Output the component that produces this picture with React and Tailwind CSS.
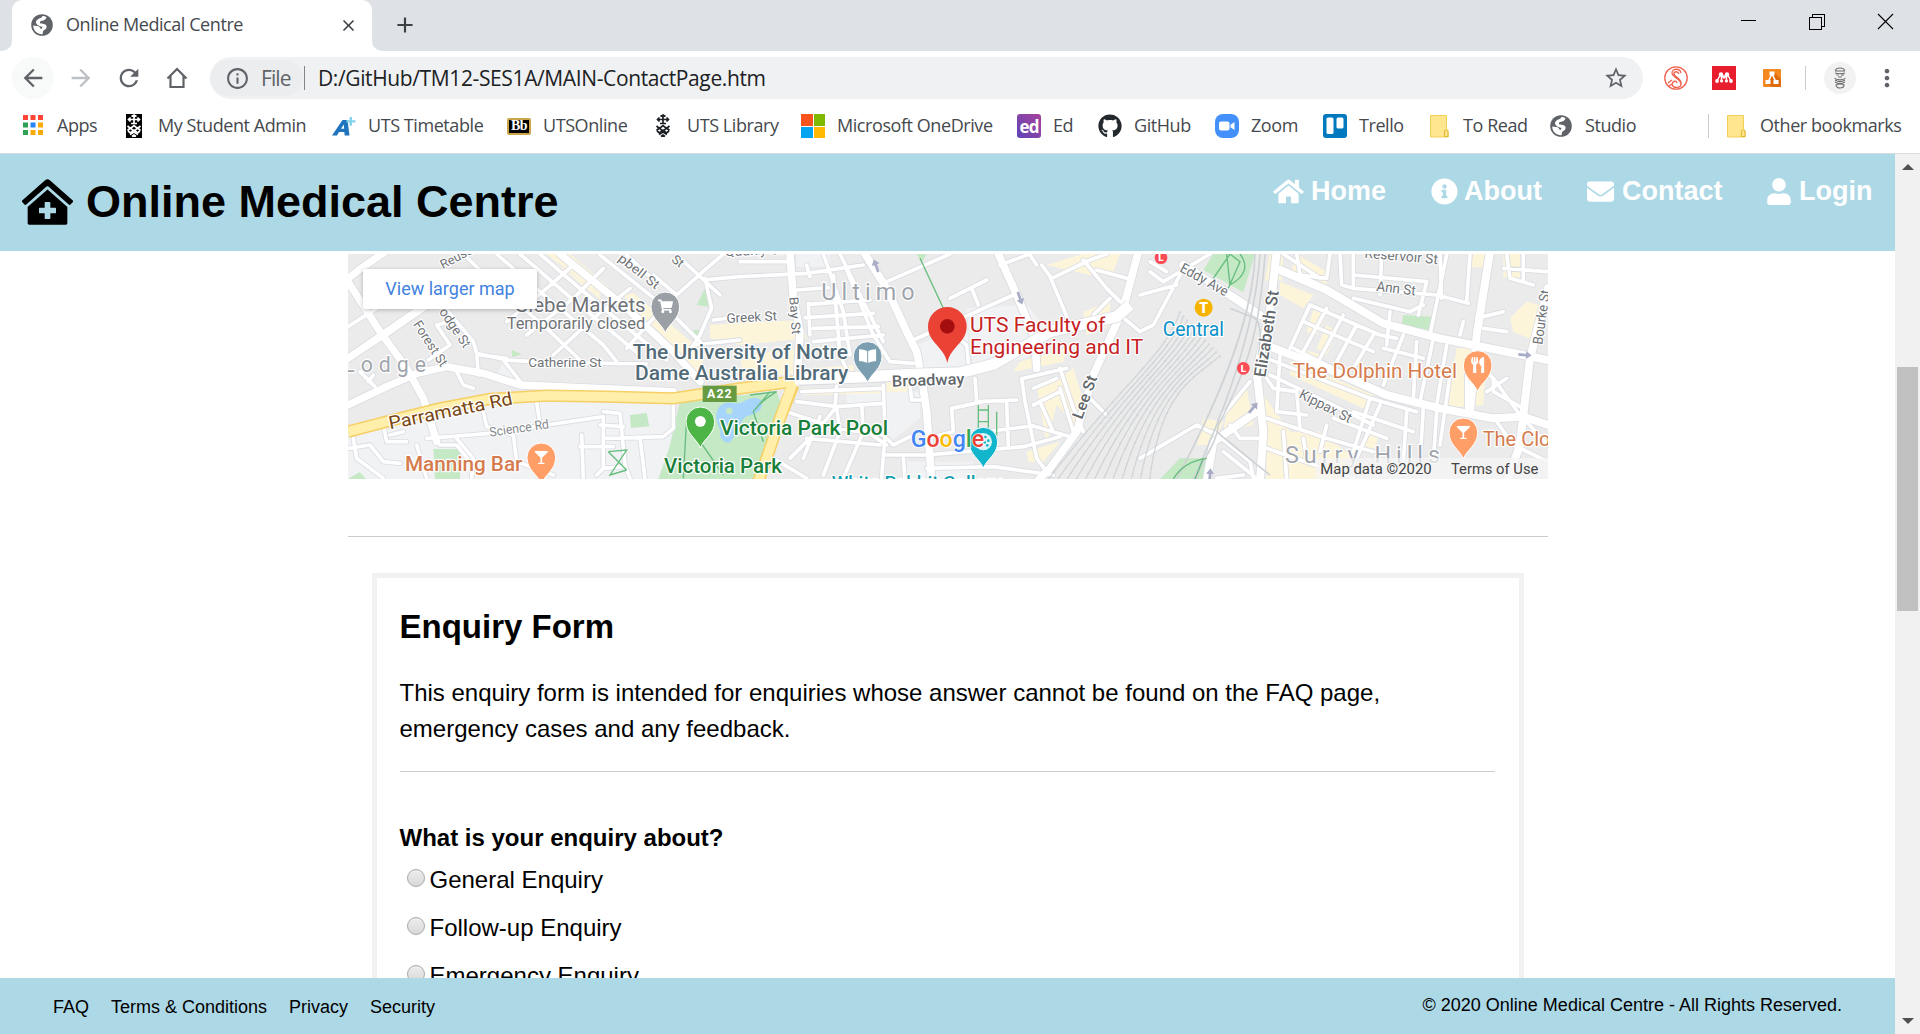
import React from "react";
import { FaHome, FaInfoCircle, FaEnvelope, FaUser, FaClinicMedical, FaGithub, FaUtensils, FaShoppingCart, FaGlassMartini, FaBookOpen } from "react-icons/fa";
import { MdArrowBack, MdArrowForward, MdRefresh, MdStarBorder, MdMoreVert, MdInfoOutline, MdClose, MdAdd } from "react-icons/md";

function Folder() {
  return (
    <svg viewBox="0 0 24 24" className="size-6">
      <path d="M3.5 1.5h16v14l1.5 1v6.500h-17.500z" fill="#ffe68f" stroke="#f2cf56" strokeWidth="1" />
      <path d="M17.500 22.500v-5q0-1.500 1.700-1.500t1.800 1.500v5z" fill="#ffe68f" stroke="#e3bb3c" strokeWidth="1.200" />
    </svg>
  );
}

function Apps() {
  const c = ["#ff4438", "#ff4438", "#ff4438", "#2fa157", "#2684fc", "#fbab07", "#2fa157", "#fbab07", "#fbab07"];
  return (
    <svg viewBox="0 0 24 24" className="size-6">
      {c.map((f, i) => <rect key={i} x={2 + (i % 3) * 7.5} y={1 + Math.floor(i / 3) * 7.5} width="5" height="5" fill={f} />)}
    </svg>
  );
}

function Crest({ inverse }) {
  const ink = inverse ? "#fff" : "#1c2024";
  return (
    <svg viewBox="0 0 24 24" className="size-6">
      {inverse && <rect x="4" width="16" height="24" fill="#000" />}
      <g stroke={ink} fill="none" strokeWidth="1.700">
        <path d="M12 1v8M7 5.500h10M9.500 2.500l2.500-1.500 2.500 1.500M8.500 3.500L6.500 5.500l2 2M15.500 3.500l2 2-2 2M9 9.500h6" />
        <path d="M5.500 12l3 2.500 3.500-3 3.500 3 3-2.500M5.500 16.500l3-2.500 3.500 3.500 3.500-3.500 3 2.500M6 17l2.500 2 3.500-3 3.500 3 2.500-2M8 20.500l4-2.500 4 2.500M10 22.500l2-1.500 2 1.500" />
      </g>
    </svg>
  );
}

function Globe() {
  return (
    <svg viewBox="0 0 24 24" className="size-6 shrink-0">
      <circle cx="12" cy="12" r="10.800" fill="#5f6368" />
      <path d="M16.500 4.200C16 6.500 14 7.500 12 7.800C10.500 8 9.500 9 10 10.300C12 11 15.500 10.500 16.500 13C17 16 15 16.500 13.800 17.200C12.800 18 13 19.500 12.500 21.200C7.500 21.500 3.200 17.500 3.200 12.500L8.500 13.200C10.500 13.500 9.500 16.500 12 15.500L12.500 13.800C10 13.500 6.500 12 6 9.500C5.800 7.500 8.500 5.500 10.500 5C11.500 4.700 12 3.800 12.500 3C14 3 15.500 3.500 16.500 4.200Z" fill="#fff" />
    </svg>
  );
}

const timetable = (
  <svg viewBox="0 0 24 24" className="size-6">
    <path fillRule="evenodd" d="M0 21.500L10.500 6h5l2 15.500h-4.800l-.4-3.500H7l-2 3.500zM9 14.700h3.200l-.5-4.200z" fill="#1f74bd" />
    <path d="M17.500 3h2.500v3.200h3.500v2.300H20v3.200h-2.500V8.500H14.500V6.200h3z" fill="#85d2ec" />
  </svg>
);

const blackboard = (
  <div className="flex h-[17px] w-6 items-center justify-center rounded-[2px] border-2 border-[#c9a64a] bg-black pb-px font-['Liberation_Serif',serif] text-[14px] leading-none font-bold tracking-[-0.5px] text-white">Bb</div>
);

const microsoft = (
  <div className="grid size-6 grid-cols-2 gap-[1px]">
    <div className="bg-[#f8531d]" /><div className="bg-[#7fba00]" /><div className="bg-[#02a4ef]" /><div className="bg-[#ffb901]" />
  </div>
);

const ed = (
  <div className="flex size-6 items-center justify-center rounded-[3px] bg-linear-to-tr from-[#5d43b5] to-[#a83f9c] font-['Open_Sans',sans-serif] text-[17px] leading-none font-bold tracking-[-0.8px] text-white">ed</div>
);

const zoom = (
  <svg viewBox="0 0 24 24" className="size-6">
    <rect width="24" height="24" rx="8" fill="#4490fb" />
    <rect x="4" y="7.500" width="10.500" height="9" rx="2" fill="#fff" />
    <path d="M15.500 10.700l4-2.700v8l-4-2.700z" fill="#fff" />
  </svg>
);

const trello = (
  <svg viewBox="0 0 24 24" className="size-6">
    <rect width="24" height="24" rx="3" fill="#0079bf" />
    <rect x="3.500" y="3.500" width="7" height="16.500" rx="1.500" fill="#fff" />
    <rect x="13.500" y="3.500" width="7" height="11" rx="1.500" fill="#fff" />
  </svg>
);

const bookmarks = [
  { label: "Apps", icon: <Apps />, w: "w-[101px]" },
  { label: "My Student Admin", icon: <Crest inverse />, w: "w-[210px]" },
  { label: "UTS Timetable", icon: timetable, w: "w-[175px]" },
  { label: "UTSOnline", icon: blackboard, w: "w-[144px]" },
  { label: "UTS Library", icon: <Crest />, w: "w-[150px]" },
  { label: "Microsoft OneDrive", icon: microsoft, w: "w-[216px]" },
  { label: "Ed", icon: ed, w: "w-[81px]" },
  { label: "GitHub", icon: <FaGithub className="size-6 text-[#24292e]" />, w: "w-[117px]" },
  { label: "Zoom", icon: zoom, w: "w-[108px]" },
  { label: "Trello", icon: trello, w: "w-[104px]" },
  { label: "To Read", icon: <Folder />, w: "w-[122px]" },
  { label: "Studio", icon: <Globe />, w: "w-[159px]" },
];

function Bookmark({ label, icon, w }) {
  return (
    <div className={"flex shrink-0 items-center gap-3 whitespace-nowrap " + w}>
      <div className="flex size-6 shrink-0 items-center justify-center">{icon}</div>
      <span className="-mt-px">{label}</span>
    </div>
  );
}

function BrowserChrome() {
  return (
    <div className="font-['Open_Sans',sans-serif] text-[#45494d]">
      <div className="flex h-[51px] bg-[#dee1e6]">
        <div className="h-full w-3 bg-white"><div className="h-full rounded-br-[10px] bg-[#dee1e6]" /></div>
        <div className="flex h-full w-[360px] items-center rounded-t-[10px] bg-white pb-px pl-[18px]">
          <Globe />
          <span className="-mt-px ml-[12px] w-[273px] text-[18px] tracking-[-0.43px]">Online Medical Centre</span>
          <MdClose className="size-[19px] text-[#3c4043]" />
        </div>
        <div className="h-full w-5 bg-white"><div className="h-full rounded-bl-[10px] bg-[#dee1e6]" /></div>
        <MdAdd className="mt-3 size-[26px] text-[#3c4043]" />
        <svg viewBox="0 0 160 24" className="mt-[9px] ml-auto h-6 w-[160px]" fill="none" stroke="#000" shapeRendering="crispEdges">
          <path d="M1 11.500h15" />
          <path d="M69.500 8.500h11.500v11.500H69.500zM72.500 8V5.500h11.500v11.500h-3" />
          <path d="M138 5l15 15M153 5l-15 15" shapeRendering="auto" strokeWidth="1.100" />
        </svg>
        <div className="w-[20px]" />
      </div>
      <div className="flex h-[52px] items-start bg-white pt-[6px] pl-3 text-[#5f6368]">
        <div className="flex gap-[6px]">
          <div className="flex size-[42px] items-center justify-center rounded-full bg-[#f8f9f9]"><MdArrowBack className="size-7" /></div>
          <div className="flex size-[42px] items-center justify-center text-[#bdc1c6]"><MdArrowForward className="size-7" /></div>
          <div className="flex size-[42px] items-center justify-center"><MdRefresh className="size-7" /></div>
          <div className="flex size-[42px] items-center justify-center">
            <svg viewBox="0 0 24 24" className="size-6" fill="none" stroke="currentColor" strokeWidth="2.200"><path d="M2.500 12.500L12 3l9.500 9.500M5.500 10v11h13V10" /></svg>
          </div>
        </div>
        <div className="ml-3 flex h-[42px] w-[1433px] items-center rounded-full bg-[#eff1f3] pr-[14px] text-[21px] leading-none">
          <div className="flex h-9 w-[93px] items-center rounded-full bg-[#ebedef] pl-[15px]">
            <MdInfoOutline className="size-[25px]" />
            <span className="ml-[11px] tracking-[-0.9px]">File</span>
          </div>
          <div className="ml-px h-6 w-px bg-[#80868b]" />
          <span className="ml-[13px] tracking-[-0.38px] text-[#202124]">D:/GitHub/TM12-SES1A/MAIN-ContactPage.htm</span>
          <MdStarBorder className="ml-auto size-[26px]" />
        </div>
        <div className="flex h-[42px] flex-1 items-center">
          <svg viewBox="0 0 24 24" className="ml-[21px] size-6" fill="none" stroke="#f0614d" strokeWidth="1.300">
            <circle cx="12" cy="12" r="11.200" />
            <path d="M17 7C16 2 8 2 8 7c0 4 9 6 9 11 0 4-8 5-9 0l-3 2M15 8c-1-3-5-3-5 0 0 3 9 5 7 11M8 18c1-3 4-4 5-1M4 17l4-3" />
          </svg>
          <svg viewBox="0 0 24 24" className="ml-6 size-6">
            <rect width="24" height="24" fill="#e81e2e" />
            <path d="M5 15L8.500 8.500L12 11L15.500 8.500L19 15M9.500 9.500V15M14.500 9.500V15" fill="none" stroke="#fff" strokeWidth="1.500" />
            <g fill="#fff"><circle cx="9" cy="8.500" r="2.200" /><circle cx="15" cy="8.500" r="2.200" /><circle cx="5" cy="15" r="1.900" /><circle cx="9.600" cy="15" r="1.600" /><circle cx="14.400" cy="15" r="1.600" /><circle cx="19" cy="15" r="1.900" /><circle cx="12" cy="11" r="1.800" /></g>
          </svg>
          <svg viewBox="0 0 18 18" className="ml-[27px] size-[18px]">
            <rect width="18" height="18" rx="1" fill="#f5891f" /><path d="M11 3l7 7v8H9l-6-4z" fill="#df6c0c" />
            <path d="M9 5L5 13M9 5l4 8" stroke="#fff" strokeWidth="1.500" />
            <path d="M6.500 2.500h5v4h-5zM2.500 11h5v4h-5zM10.500 11h5v4h-5z" fill="#fff" />
          </svg>
          <div className="ml-6 h-6 w-px bg-[#c9ccd0]" />
          <div className="ml-[18px] flex size-8 items-center justify-center rounded-full bg-[#f2f2f2]">
            <svg viewBox="0 0 16 22" className="h-[22px] w-4" fill="none" stroke="#6b6b6b" strokeWidth="1.100">
              <path d="M3.500 4c0-4 9-4 9 0zM3 6c2 1 8 1 10 0M4.500 8h2M9 8h3M6 10h4M2.500 11c2 2.500 9 2.500 11 0M3 13c3 2 7 2 10 0M3 15c3 2 7 2 10 0M4 18c3-1.500 5-1.500 8 0 0 4-8 4-8 0z" />
            </svg>
          </div>
          <MdMoreVert className="ml-[17px] size-7" />
        </div>
      </div>
      <div className="flex h-[51px] items-start border-b border-[#d9dcdf] bg-white pl-[21px] text-[18px] tracking-[-0.43px]">
        <div className="flex h-[46px] w-full items-center">
          {bookmarks.map((b) => <Bookmark key={b.label} {...b} />)}
          <div className="mr-[15px] h-6 w-px bg-[#c9ccd0]" />
          <Bookmark label="Other bookmarks" icon={<Folder />} w="w-[180px]" />
        </div>
      </div>
    </div>
  );
}

/* Map geometry is drawn at three units per pixel. */
function Label({ x, y, s, len, fill = "#6f7377", rot, weight = 400, halo = "#fff", children }) {
  return (
    <text x={x} y={y} fontSize={s} textLength={len} fill={fill} fontWeight={weight} stroke={halo} strokeWidth="7" strokeLinejoin="round" lengthAdjust="spacingAndGlyphs"
      paintOrder="stroke" transform={rot ? `rotate(${rot} ${x} ${y})` : undefined}>{children}</text>
  );
}

function Pin({ x, y, r, fill, dot, children }) {
  const h = r * 1.850;
  return (
    <g transform={`translate(${x} ${y})`}>
      <path d={`M0 ${h} C${-r * 0.25} ${h * 0.65} ${-r} ${r * 0.9} ${-r} 0 A${r} ${r} 0 1 1 ${r} 0 C${r} ${r * 0.9} ${r * 0.25} ${h * 0.65} 0 ${h}Z`} fill={fill} stroke="#fff" strokeWidth="3" />
      {dot && <circle r={r * 0.38} fill={dot} />}
      {children}
    </g>
  );
}

const minor = [
  "M24 245L110 190M24 345L140 270L300 160M60 380L105 425M85 410L100 390M300 170L400 290L410 325M345 225L290 240L330 300L265 345",
  "M370 27L455 110L620 250L720 345M470 27L600 140L790 300L830 350M540 27L700 165L900 330M600 27L760 165L980 345M780 30L980 190L1080 290M860 30L930 95",
  "M500 230L620 130L700 60M560 270L700 160L790 70M640 330L760 220L870 130M860 310L940 220M1010 30L1140 150M940 90L1010 150L1100 70L1150 27",
  "M410 325L500 345L620 352L920 357M410 325L415 390M490 345L545 415M420 330L500 340M350 380L370 420L400 430",
  "M1090 105L1200 95M1095 100L1115 190L1080 270L1040 330M1060 300L1200 285M1120 225L1200 215",
  "M590 470L600 540M260 580L450 565L620 540L790 515M430 500L440 545L520 570L530 650L640 690M350 580L400 640L395 700M130 540L140 590L200 590M150 570L190 560M40 580L50 640L130 700M24 610L90 600L130 650L180 655M230 600L260 700M300 600L350 600L390 650",
  "M790 515L790 670L770 690M790 500L840 505L855 660L870 700M800 580L970 575L1000 550L1000 475M720 605L820 605M725 570L730 700M900 580L915 700M780 540L850 545M790 670L850 665",
];

const minorB = [
  "M0 95L200 85L370 60M0 50L150 50M170 135L265 128M205 178L390 165M195 218L400 205M220 250L415 245M220 290L430 270M200 60L210 95M280 90L300 330L330 395M205 175L210 270M320 75L400 270L450 350L520 355M250 27L310 200L330 330M300 27L370 170L430 290",
  "M440 110L630 27M630 160L740 105M695 130L715 180M520 285L820 150M640 270L680 300L688 380M780 60L870 27M905 60L935 100L1050 45L1100 27M930 95L970 190L990 240M1030 45L1100 130L1140 170M1070 75L1160 100M1060 210L1110 160M1140 210L1200 260M870 30L890 60",
  "M170 470L290 485L430 475M290 420L285 490L230 560L150 640M185 440L430 430M430 420L435 570L425 700M365 480L370 560L310 700M290 490L300 560L250 690M140 500L290 550L430 570M240 515L190 640M200 580L420 600M350 540L440 600M100 640L200 700M510 420L515 465L550 465",
  "M705 400L710 470L830 465M635 490L640 560L560 580M635 490L730 470M560 630L850 605L960 575M440 630L560 630M560 670L760 665L940 690M800 475L805 600M845 400L855 470L890 640M890 640L920 680M850 400L980 370M880 430L950 400M880 480L960 440M870 540L990 575M960 370L1000 490L1030 560M1040 450L1100 510M900 470L940 560M960 430L1000 560M740 560L860 545M430 570L460 600L510 575M490 640L495 700",
];

const minorC = [
  "M30 80L70 110L210 27M30 50L80 80M0 150L110 120M0 260L40 240L120 90M430 27L540 100M470 27L480 90L560 100L570 27M600 27L605 120L640 130L640 27M640 90L860 110M640 130L890 150L985 175M725 27L720 150M900 27L905 160M990 27L980 170M1100 27L1110 100L1180 120M1090 70L1224 80M1150 27L1150 110M860 110L835 210M920 30L870 270",
  "M510 180L450 310M560 190L490 320M610 210L540 340M650 240L590 350M700 270L640 370M750 200L740 300M790 270L730 420M830 290L820 460M880 280L840 470M920 300L890 480M510 180L720 270L770 280M490 230L700 320M460 310L640 400M730 310L850 340M640 160L810 200L850 180M1030 180L1010 220L1090 200M1030 250L1100 260M960 270L970 230",
  "M380 340L690 460L830 500M390 390L600 490L700 540M380 400L400 430L470 440L480 550M690 460L640 620M720 480L650 640M800 500L790 650M850 490L840 650M890 500L880 650M930 390L900 600M980 390L980 490M640 500L820 560M560 540L540 620M580 520L740 580M380 520L560 580L700 620M420 330L410 500L500 510M1060 400L1060 440L1150 490M1100 400L1040 440M1000 340L1060 400L1140 510M1150 520L1224 600M1070 530L1120 600L1224 650",
  "M0 640L170 540L230 570M220 560L330 650L340 700M270 540L300 580L370 580M230 700L310 690M250 620L350 700M380 610L640 700M430 560L440 700M490 580L500 640M240 520L330 410",
];

const majorA = ["M24 100L70 65L135 20", "M24 110L120 260L200 370L250 460L290 590", "M24 480L140 425L230 385L320 365L430 385L540 420L1000 440", "M660 27L860 190L1000 320L1080 410", "M24 340L330 130"];
const majorB = ["M150 27L160 160L180 260L172 400", "M375 27L440 130L500 260L530 320L545 400L560 500L575 710", "M775 27L830 150L885 280L890 370", "M1195 20L1150 190L1060 390L1010 560L930 670L890 710"];
const majorC = ["M410 20L390 200L350 380L370 560L360 710", "M420 75L560 135L730 235L900 280L1224 345", "M390 305L560 370L740 450L900 490L1060 520L1150 515", "M1050 20L1010 270L990 500", "M1224 130L1170 340L1150 510L1140 600L1100 710", "M350 500L220 590L200 710", "M130 60L300 170L360 210", "M1150 515L1224 540"];

function Roads({ d, w, casing }) {
  return (
    <path d={d.join("")} fill="none" strokeLinejoin="round" strokeLinecap="round"
      stroke={casing ? "#dadce2" : "#fff"} strokeWidth={casing ? w + 5 : w} />
  );
}

function Streets({ casing }) {
  return (
    <>
      <Roads d={minor} w={11} casing={casing} />
      <Roads d={majorA} w={22} casing={casing} />
      <g transform="translate(1200 0)"><Roads d={minorB} w={11} casing={casing} /><Roads d={majorB} w={23} casing={casing} /></g>
      <g transform="translate(2400 0)"><Roads d={minorC} w={11} casing={casing} /><Roads d={majorC} w={24} casing={casing} /></g>
    </>
  );
}

function Glyph({ icon: Icon, size }) {
  return <Icon x={-size / 2} y={-size / 2} size={size} color="#fff" />;
}

const rails = Array.from({ length: 12 }, (_, i) => `M${2520 + i * 11} ${200 + i * 12}C${2480 + i * 8} ${330 + i * 6} ${2330 + i * 12} 430 ${2120 + i * 28} 710`).join("");

function StreetMap() {
  return (
    <svg viewBox="24 27 3600 675" className="block h-[225px] w-[1200px]" fontFamily="Roboto, sans-serif">
      <rect x="24" y="27" width="3600" height="675" fill="#ebebeb" />
      <g fill="#f1f2f4">
        <path d="M24 580L300 500L470 470L1000 475L990 702H24zM470 390L490 350L530 410zM1730 300L1880 240L1890 370L1740 380zM1880 190L2060 180L2130 260L2060 340L1900 370zM1640 440L1740 440L1740 520L1640 600zM1520 440L1640 440L1640 480L1520 480z" />
        <path d="M1370 27L1470 27L1470 65L1370 65zM1700 650h200v52h-200z" />
      </g>
      <g fill="#fdf5da">
        <path d="M620 27L690 27L810 130L780 150zM850 150L880 145L1100 330L1060 400L1010 350zM640 50L740 130L790 170L770 140zM1110 240L1380 225L1400 280L1200 300L1110 280zM1200 330L1380 310L1380 385L1210 400zM1390 430L1630 430V445L1390 450zM1420 370L1540 360V385L1420 390zM1640 400L1720 400L1700 440L1640 440z" />
        <path d="M2040 350L2180 310L2170 350L2020 380zM2090 420L2190 390L2230 560L2150 480L2120 600zM2160 400L2200 370L2240 500L2200 560zM2060 620L2160 590L2110 650L2065 650zM2120 60L2230 27L2340 27L2320 80L2250 90zM2230 200L2310 170L2310 240L2240 270z" />
        <path d="M2790 27h40l-5 80h-50zM2870 27L2960 80L2960 150L2850 90zM2820 110L2920 150L2890 190L2820 150zM2920 195L2960 210L2930 270L2900 260zM2960 240L2990 260L2960 330L2930 310zM2870 310L2950 330L2930 370L2860 350zM2980 400L3100 450L3070 490L2850 390V350zM2770 450L2850 560L2940 560L3030 630L2990 702H2780zM2590 520L2650 530L2620 600L2570 600zM2660 500L2720 430L2740 540L2650 560zM3350 310L3440 310L3430 480L3320 490zM3510 220L3560 170L3600 180L3590 290L3520 260zM3400 27h60l-10 40h-60zM3090 570L3120 560L3100 620L3070 610zM3490 27h50v70h-50z" />
      </g>
      <g fill="#c5e8c5">
        <path d="M1020 470L1310 440L1325 480L1240 702H955L990 600zM870 510l50-6 8 40-55 5zM280 612h80v90h-75zM515 315l30 12-28 10zM1070 180l30-60 5 65zM24 702l35-20 20 20zM1060 255h20v30h-20z" />
        <path d="M1730 27h30l-15 25zM2620 27h125l-35 115L2590 75zM3190 210l85 5-5 40-85-15zM2460 702L2520 640L2600 640L2600 702z" />
      </g>
      <path d="M1135 490c25-35 50-5 75-20 25-15 50-15 55 0 5 20-10 35-40 42-25 5-30 50-55 80-15 5-25-10-30-20 10-20-25-45-5-82z" fill="#a6d4fb" />
      <circle cx="1168" cy="498" r="10" fill="#c5e8c5" />
      <Streets casing />
      <Streets />
      <g fill="none">
        <path d="M24 560L150 527L300 490L450 462L620 452L800 455L1000 460L1200 430L1360 410M1360 420L1320 520L1290 610L1255 710" stroke="#f6cf65" strokeWidth="37" />
        <path d="M24 560L150 527L300 490L450 462L620 452L800 455L1000 460L1200 430L1360 410M1360 410L1320 520L1290 610L1255 710" stroke="#ffefab" strokeWidth="28" />
        <path d="M1375 403L1545 397L1720 388L1860 383L1960 358L2130 260L2330 215L2370 180" stroke="#dadce2" strokeWidth="38" />
        <path d="M1365 403L1545 397L1720 388L1860 383L1960 358L2130 260L2330 215L2370 180" stroke="#fff" strokeWidth="33" />
        <path d={rails} stroke="#cfd3d6" strokeWidth="3.500" />
        <path d={rails} stroke="#cfd3d6" strokeWidth="7" strokeDasharray="2 32" />
        <path d="M2760 27C2750 180 2700 400 2560 702M2745 27C2740 200 2660 420 2510 702M2775 27C2760 240 2730 360 2635 540C2630 600 2580 650 2570 702M2670 190L2745 220Q2770 240 2755 330M2630 560Q2700 620 2790 690" stroke="#cfd3d6" strokeWidth="5" />
        <path d="M1740 40L1810 190M805 620L860 615L810 690L860 675M805 620L860 675M1915 480V560M1945 480V600M1915 495h30M1915 530h30M1970 500V570L1940 560M1040 520L1030 700M1060 560L1150 690M1290 440L1240 500L1270 590M1230 450L1310 440M1240 500Q1260 470 1310 440M2620 100L2670 27L2700 50L2665 130M2660 27L2670 120M2700 27Q2740 80 2670 120M2500 702Q2530 650 2600 640M2590 640L2565 702" stroke="#66bd7e" strokeWidth="4" />
      </g>
      <g fill="#a9acc5">
        {[[1608, 62, -20], [2040, 160, 160], [2740, 488, 40], [2610, 690, 5], [3555, 330, 95]].map(([x, y, r]) => (
          <path key={x} transform={`translate(${x} ${y}) rotate(${r})`} d="M0-20L12-3H4V20H-4V-3H-12z" />
        ))}
      </g>

      <Label x="308" y="72" s="37" len="150" rot="-27">Reuss St</Label>
      <Label x="832" y="45" s="38" len="145" rot="38">pbell St</Label>
      <Label x="992" y="48" s="38" rot="38">St</Label>
      <Label x="1155" y="33" s="38" len="175" rot="-2">Quarry St</Label>
      <Label x="296" y="200" s="40" len="135" rot="56">odge St</Label>
      <Label x="218" y="238" s="40" len="155" rot="57">Forest St</Label>
      <text x="10" y="382" fontSize="64" textLength="248" fill="#a0a5ad" stroke="#fff" strokeWidth="7" paintOrder="stroke">Lodge</text>
      <Label x="565" y="365" s="40" len="220">Catherine St</Label>
      <Label x="1160" y="234" s="40" len="152" rot="-3">Greek St</Label>
      <Label x="450" y="575" s="39" len="180" rot="-8" fill="#85898e">Science Rd</Label>
      <Label x="150" y="553" s="54" len="378" rot="-11.500" fill="#784514">Parramatta Rd</Label>
      <Label x="523" y="202" s="59" len="394">Glebe Markets</Label>
      <Label x="500" y="252" s="47" len="416">Temporarily closed</Label>
      <Label x="878" y="343" s="59" len="646" fill="#526b78" weight="500">The University of Notre</Label>
      <Label x="885" y="405" s="59" len="640" fill="#526b78" weight="500">Dame Australia Library</Label>
      <Label x="195" y="677" s="59" len="352" fill="#d57b4d" weight="500">Manning Bar</Label>
      <rect x="1088" y="422" width="102" height="49" fill="#669b42" />
      <text x="1101" y="460" fontSize="37" fontWeight="700" fill="#fff" textLength="74">A22</text>
      <Label x="1140" y="571" s="59" len="504" fill="#188038" weight="500">Victoria Park Pool</Label>
      <Label x="972" y="684" s="59" len="354" fill="#188038" weight="500">Victoria Park</Label>
      <text x="1444" y="164" fontSize="70" textLength="280" fill="#a0a5ad" stroke="#fff" strokeWidth="7" paintOrder="stroke">Ultimo</text>
      <Label x="1348" y="157" s="38" len="112" rot="86">Bay St</Label>
      <Label x="1656" y="425" s="47" len="218" rot="-2" fill="#62676b" weight="500">Broadway</Label>
      <Label x="1890" y="262" s="59" len="406" fill="#c5221f">UTS Faculty of</Label>
      <Label x="1890" y="326" s="59" len="520" fill="#c5221f">Engineering and IT</Label>
      <Label x="2226" y="525" s="47" len="135" rot="-70" fill="#62676b" weight="500">Lee St</Label>
      <Label x="1475" y="731" s="57" len="510" fill="#129eaf" weight="500">White Rabbit Gallery</Label>
      <Label x="2517" y="78" s="42" len="158" rot="29">Eddy Ave</Label>
      <Label x="2468" y="272" s="58" len="184" fill="#0b90c8">Central</Label>
      <Label x="2776" y="398" s="50" len="262" rot="-81" fill="#62676b" weight="500">Elizabeth St</Label>
      <Label x="3073" y="38" s="42" len="220" rot="5">Reservoir St</Label>
      <Label x="3108" y="137" s="42" len="118" rot="7">Ann St</Label>
      <Label x="3607" y="300" s="42" len="165" rot="-82">Bourke St</Label>
      <Label x="2858" y="400" s="59" len="493" fill="#d57b4d">The Dolphin Hotel</Label>
      <Label x="2875" y="457" s="41" len="170" rot="27">Kippax St</Label>
      <text x="2835" y="655" fontSize="70" textLength="465" fill="#a0a5ad" stroke="#fff" strokeWidth="7" paintOrder="stroke">Surry Hills</text>
      <Label x="3428" y="604" s="59" len="265" fill="#d57b4d">The Clock</Label>

      <Pin x="976" y="184" r="43" fill="#9aa0a6"><Glyph icon={FaShoppingCart} size={46} /></Pin>
      <Pin x="604" y="637" r="43" fill="#ff9e67"><Glyph icon={FaGlassMartini} size={40} /></Pin>
      <Pin x="1081" y="529" r="43" fill="#4db546" dot="#fff" />
      <Pin x="1583" y="333" r="43" fill="#7b9eb0"><Glyph icon={FaBookOpen} size={52} /></Pin>
      <g transform="translate(1822 244)">
        <path d="M0 110C-10 60-58 50-58 0A58 58 0 1 1 58 0C58 50 10 60 0 110Z" fill="#ea4335" /><circle r="22" fill="#a50e0e" />
      </g>
      <Pin x="1930" y="590" r="43" fill="#12b5cb">
        <circle r="26" fill="#fff" opacity=".85" />
        <g fill="#12b5cb"><circle cx="6" cy="-14" r="4" /><circle cx="15" cy="-3" r="4" /><circle cx="4" cy="2" r="4" /><circle cx="12" cy="11" r="4" /></g>
      </Pin>
      <Pin x="3413" y="360" r="43" fill="#ff9e67"><Glyph icon={FaUtensils} size={48} /></Pin>
      <Pin x="3370" y="562" r="43" fill="#ff9e67"><Glyph icon={FaGlassMartini} size={40} /></Pin>
      <circle cx="2591" cy="188" r="27" fill="#f6b400" /><text x="2591" y="203" textAnchor="middle" fontSize="42" fontWeight="900" fill="#fff">T</text>
      {[[2463, 38], [2710, 370]].map(([x, y]) => (
        <g key={x}><circle cx={x} cy={y} r="19" fill="#fb4b55" /><text x={x - 8} y={y + 11} fontSize="29" fontWeight="900" fill="#fff">L</text></g>
      ))}
      <text x="1712" y="606" fontSize="70" fontWeight="500" textLength="220" lengthAdjust="spacingAndGlyphs" stroke="#fff" strokeWidth="5" paintOrder="stroke">
        <tspan fill="#4285f4">G</tspan><tspan fill="#ea4335">o</tspan><tspan fill="#fbbc04">o</tspan><tspan fill="#4285f4">g</tspan><tspan fill="#34a853">l</tspan><tspan fill="#ea4335">e</tspan>
      </text>
      <rect x="2928" y="639" width="700" height="63" fill="#f5f5f5" opacity=".72" />
      <text x="2941" y="686" fontSize="45" textLength="334" lengthAdjust="spacingAndGlyphs" fill="#444">Map data ©2020</text>
      <text x="3333" y="686" fontSize="45" textLength="262" lengthAdjust="spacingAndGlyphs" fill="#444">Terms of Use</text>
    </svg>
  );
}

function NavItem({ icon: Icon, label, className, iconClass }) {
  return <a className={"flex items-center whitespace-nowrap " + className}><Icon className={"h-[27px] shrink-0 " + iconClass} />{label}</a>;
}

function Option({ label }) {
  return (
    <label className="flex h-12 items-start pl-[7px]">
      <span className="mt-[5px] mr-[5px] size-[18px] rounded-full border border-[#a9a9a9] bg-linear-to-b from-[#eeeeee] to-[#d8d8d8]" />
      <span className="leading-[32px]">{label}</span>
    </label>
  );
}

export default function App() {
  return (
    <div className="flex h-[1034px] w-[1920px] flex-col overflow-hidden bg-white">
      <BrowserChrome />
      <div className="flex h-[880px] font-['Liberation_Sans',Arial,sans-serif] text-black">
        <div className="flex h-full w-[1895px] flex-col">
          <header className="flex h-[97px] shrink-0 items-start justify-between bg-[#add8e6] pl-[22px]">
            <h1 className="flex items-center pt-[21px] text-[45px] leading-[54px] font-bold"><FaClinicMedical className="mr-[13px] h-[46px] w-[51px]" />Online Medical Centre</h1>
            <nav className="flex pt-[21px] text-[27px] leading-[32px] font-bold text-white">
              <NavItem icon={FaHome} label="Home" className="w-[158px]" iconClass="w-[31px] mr-[7px]" />
              <NavItem icon={FaInfoCircle} label="About" className="w-[156px]" iconClass="w-[27px] mr-[6px]" />
              <NavItem icon={FaEnvelope} label="Contact" className="w-[180px]" iconClass="w-[27px] mr-[8px]" />
              <NavItem icon={FaUser} label="Login" className="w-[128px]" iconClass="w-[24px] mr-[8px]" />
            </nav>
          </header>
          <main className="h-[727px] overflow-hidden">
            <div className="mx-auto w-[1200px] pt-[3px]">
              <div className="relative">
                <StreetMap />
                <a className="absolute top-[15px] left-[15px] flex h-10 w-[174px] items-center justify-center rounded-[2px] bg-white pb-px pl-px font-['Roboto',sans-serif] text-[18px] text-[#3f82e0] shadow-[0_1px_4px_rgba(0,0,0,0.25)]">View larger map</a>
              </div>
              <hr className="mt-[57px] border-[#cccccc]" />
              <section className="mx-6 mt-[36px] h-[600px] border-[5px] border-[#f1f1f1] pr-6 pl-[23px] pt-[30px] text-[24px]">
                <h2 className="text-[33px] leading-[38px] font-bold">Enquiry Form</h2>
                <p className="mt-[29px] leading-[36px]">This enquiry form is intended for enquiries whose answer cannot be found on the FAQ page,<br />emergency cases and any feedback.</p>
                <hr className="mt-[24px] border-[#cccccc]" />
                <h3 className="mt-[48px] mb-[8px] leading-[36px] font-bold">What is your enquiry about?</h3>
                <Option label="General Enquiry" />
                <Option label="Follow-up Enquiry" />
                <Option label="Emergency Enquiry" />
              </section>
            </div>
          </main>
          <footer className="flex h-14 shrink-0 items-start justify-between bg-[#add8e6] pr-[53px] pl-[53px] text-[18px]">
            <div className="flex gap-[22px] pt-[16px]"><a>FAQ</a><a>Terms &amp; Conditions</a><a>Privacy</a><a>Security</a></div>
            <p className="pt-[14px]">© 2020 Online Medical Centre - All Rights Reserved.</p>
          </footer>
        </div>
        <div className="flex h-full w-[25px] flex-col items-center bg-[#f1f1f1]">
          <div className="mt-[10px] h-0 w-0 border-x-[6px] border-b-[6px] border-x-transparent border-b-[#505050]" />
          <div className="mt-[197px] mr-px h-[244px] w-[21px] bg-[#c1c1c1]" />
          <div className="mt-auto mb-[10px] h-0 w-0 border-x-[6px] border-t-[6px] border-x-transparent border-t-[#505050]" />
        </div>
      </div>
    </div>
  );
}
